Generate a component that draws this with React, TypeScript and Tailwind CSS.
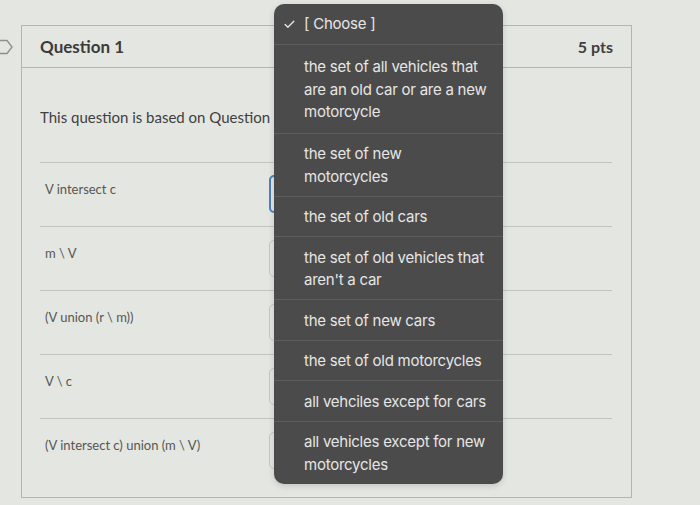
import { Check } from "lucide-react";

const rows = [
  "V intersect c",
  "m \\ V",
  "(V union (r \\ m))",
  "V \\ c",
  "(V intersect c) union (m \\ V)",
];

// menu options, split where the native menu wraps them
const options = [
  ["the set of all vehicles that", "are an old car or are a new", "motorcycle"],
  ["the set of new", "motorcycles"],
  ["the set of old cars"],
  ["the set of old vehicles that", "aren't a car"],
  ["the set of new cars"],
  ["the set of old motorcycles"],
  ["all vehciles except for cars"],
  ["all vehicles except for new", "motorcycles"],
];

export default function App() {
  return (
    <div
      className="relative w-[700px] h-[505px] overflow-hidden bg-[#e4e6e1] pt-[25px] pl-[21px]"
      style={{ fontFamily: "Lato, 'Open Sans', sans-serif" }}
    >
      {/* bookmark tag on the left edge */}
      <svg className="absolute left-0 top-[39px]" width="14" height="16" viewBox="0 0 14 16">
        <path d="M-4 1.5 H7 L12 8 L7 14.5 H-4" fill="none" stroke="#8d8f8b" strokeWidth="1.3" strokeLinejoin="round" />
      </svg>

      {/* question card */}
      <div className="w-[611px] h-[473px] border border-[#b3b5b0]">
        <div className="h-[42px] flex items-center justify-between pl-[18px] pr-[18px] border-b border-[#b3b5b0]">
          <span className="text-[17px] font-bold text-[#3a3b3a]">Question 1</span>
          <span className="text-[16px] font-bold text-[#3e3f3e]">5 pts</span>
        </div>

        <div className="pl-[18px] pr-[19px]">
          <p className="h-[94px] pt-[39px] text-[15px] text-[#3f403f] leading-[20px]">
            This question is based on Question 3.
          </p>
          {rows.map((r, i) => (
            <div key={r} className="h-[64px] border-t border-[#c2c4bf] flex items-start">
              <span className="w-[229px] pl-[5px] pt-[18px] text-[13px] text-[#555655] leading-[17px]">{r}</span>
              <div
                className={
                  i === 0
                    ? "mt-[12px] h-[38px] w-[200px] rounded-[5px] border-2 border-[#4d7fc4]"
                    : "mt-[13px] h-[37px] w-[200px] rounded-[5px] border border-[#c5c7c2]"
                }
              />
            </div>
          ))}
        </div>
      </div>

      {/* open select menu */}
      <div
        className="absolute left-[274px] top-[4px] w-[229px] rounded-[10px] bg-[#4b4b4b] overflow-hidden shadow-[0_2px_6px_rgba(0,0,0,0.15)]"
        style={{ fontFamily: "Inter, Roboto, sans-serif" }}
      >
        <div className="h-[40px] flex items-center pl-[9px] text-[15px] tracking-[-0.25px] text-[#e6e6e6]">
          <Check className="w-[13px] h-[13px] mr-[8px]" strokeWidth={2.5} />
          <span>[ Choose ]</span>
        </div>
        {options.map((lines, i) => (
          <div
            key={lines[0]}
            className={
              i === 0
                ? "border-t border-[#5d5d5d] pl-[30px] pt-[11px] pb-[9px] text-[15px] leading-[22.5px] tracking-[-0.25px] text-[#e6e6e6]"
                : "border-t border-[#5d5d5d] pl-[30px] pt-[9.5px] pb-[7.5px] text-[15px] leading-[22.5px] tracking-[-0.25px] text-[#e6e6e6]"
            }
          >
            {lines.map((l) => (
              <div key={l} className="whitespace-nowrap">
                {l}
              </div>
            ))}
          </div>
        ))}
      </div>
    </div>
  );
}
